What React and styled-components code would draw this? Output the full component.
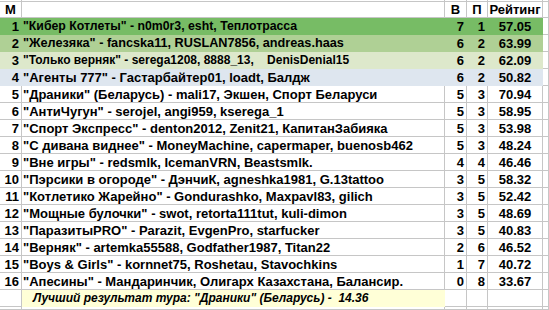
import styled, { createGlobalStyle } from "styled-components";

const GlobalStyle = createGlobalStyle`
  body {
    margin: 0;
    background: #fff;
    font-family: "Liberation Sans", Arial, sans-serif;
  }
`;

// size: в первых трёх строках название набрано чуть мельче
const teams = [
  { n: 1, name: '"Кибер Котлеты" - n0m0r3, esht, Теплотрасса', w: 7, l: 1, r: "57.05", bg: "#77bc65", size: 12.3 },
  { n: 2, name: '"Железяка" - fancska11, RUSLAN7856, andreas.haas', w: 6, l: 2, r: "63.99", bg: "#afd095", size: 12.7 },
  { n: 3, name: '"Только верняк" - serega1208, 8888_13,    DenisDenial15', w: 6, l: 2, r: "62.09", bg: "#dde8cb", size: 12 },
  { n: 4, name: '"Агенты 777" - Гастарбайтер01, loadt, Балдж', w: 6, l: 2, r: "50.82", bg: "#dee6ef" },
  { n: 5, name: '"Драники" (Беларусь) - mali17, Экшен, Спорт Беларуси', w: 5, l: 3, r: "70.94" },
  { n: 6, name: '"АнтиЧугун" - serojel, angi959, kserega_1', w: 5, l: 3, r: "58.95" },
  { n: 7, name: '"Спорт Экспресс" - denton2012, Zenit21, КапитанЗабияка', w: 5, l: 3, r: "53.98" },
  { n: 8, name: '"С дивана виднее" - MoneyMachine, capermaper, buenosb462', w: 5, l: 3, r: "48.24" },
  { n: 9, name: '"Вне игры" - redsmlk, IcemanVRN, Beastsmlk.', w: 4, l: 4, r: "46.46" },
  { n: 10, name: '"Пэрсики в огороде" - ДэнчиК, agneshka1981, G.13tattoo', w: 3, l: 5, r: "58.32" },
  { n: 11, name: '"Котлетико Жарейно" - Gondurashko, Maxpavl83, gilich', w: 3, l: 5, r: "52.42" },
  { n: 12, name: '"Мощные булочки" - swot, retorta111tut, kuli-dimon', w: 3, l: 5, r: "48.69" },
  { n: 13, name: '"ПаразитыPRO" - Parazit, EvgenPro, starfucker', w: 3, l: 5, r: "40.83" },
  { n: 14, name: '"Верняк" - artemka55588, Godfather1987, Titan22', w: 2, l: 6, r: "46.52" },
  { n: 15, name: '"Boys & Girls" - kornnet75, Roshetau, Stavochkins', w: 1, l: 7, r: "40.72" },
  { n: 16, name: '"Апесины" - Мандаринчик, Олигарх Казахстана, Балансир.', w: 0, l: 8, r: "33.67" },
];

const Sheet = styled.div`
  width: 549px;
  height: 310px;
  overflow: hidden;
  display: grid;
  grid-template-columns: 22px 423px 22px 21px 55px 1fr;
  grid-template-rows: 2px 16px repeat(17, 17px) 1fr;
  font-size: 13px;
  font-weight: bold;
  color: #000;
`;

const Cell = styled.div`
  box-sizing: border-box;
  border-right: 1px solid ${(p) => (p.$bg ? p.$bg : "#c6c6c6")};
  border-bottom: 1px solid ${(p) => (p.$bg ? p.$bg : "#c6c6c6")};
  background: ${(p) => p.$bg || "#fff"};
  display: flex;
  align-items: center;
  justify-content: ${(p) =>
    p.$align === "right" ? "flex-end" : p.$align === "center" ? "center" : "flex-start"};
  padding: 0 ${(p) => (p.$align === "right" ? "2px" : "0")} 0
    ${(p) => (p.$align === "left" ? "1px" : "0")};
  font-size: ${(p) => (p.$size ? `${p.$size}px` : "inherit")};
  white-space: pre;
  line-height: 15px;
`;

const Best = styled(Cell)`
  font-style: italic;
  font-size: 12px;
  padding-left: 11px;
`;

export default function App() {
  return (
    <>
      <GlobalStyle />
      <Sheet>
        {[0, 1, 2, 3, 4, 5].map((i) => (
          <Cell key={"s" + i} />
        ))}
        <Cell $align="center">М</Cell>
        <Cell />
        <Cell $align="center">В</Cell>
        <Cell $align="center">П</Cell>
        <Cell $align="center">Рейтинг</Cell>
        <Cell />
        {teams.map((t) => [
          <Cell key={t.n + "a"} $bg={t.bg} $align="right">{t.n}</Cell>,
          <Cell key={t.n + "b"} $bg={t.bg} $align="left" $size={t.size}>{t.name}</Cell>,
          <Cell key={t.n + "c"} $bg={t.bg} $align="right">{t.w}</Cell>,
          <Cell key={t.n + "d"} $bg={t.bg} $align="right">{t.l}</Cell>,
          <Cell key={t.n + "e"} $bg={t.bg} $align="center">{t.r}</Cell>,
          <Cell key={t.n + "f"} />,
        ])}
        <Cell />
        <Best $bg="#ffffd7" $align="left">Лучший результат тура: "Драники" (Беларусь) -  14.36</Best>
        <Cell />
        <Cell />
        <Cell />
        <Cell />
        {[0, 1, 2, 3, 4, 5].map((i) => (
          <Cell key={"e" + i} />
        ))}
      </Sheet>
    </>
  );
}
